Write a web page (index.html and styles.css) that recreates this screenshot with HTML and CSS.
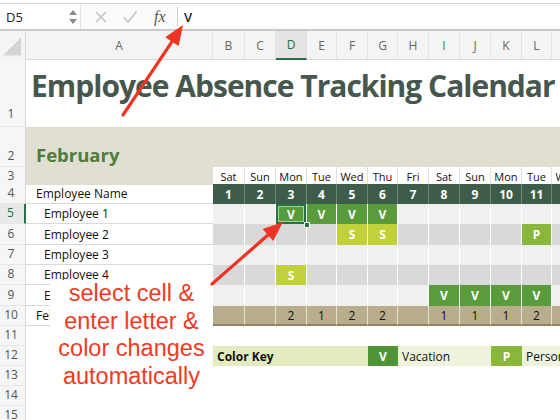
FILE: index.html
```html
<!DOCTYPE html>
<html>
<head>
<meta charset="utf-8">
<link rel="stylesheet" href="styles.css">
</head>
<body>
<div class="fbar">
  <div class="namebox"><span class="ref">D5</span><span class="spin"><i class="up"></i><i class="down"></i></span></div>
  <div class="tools">
    <svg class="ico" width="14" height="14" viewBox="0 0 14 14"><path d="M2 2 L12 12 M12 2 L2 12" stroke="#c4c4c4" stroke-width="1.6" fill="none"/></svg>
    <svg class="ico" width="16" height="14" viewBox="0 0 16 14"><path d="M1.5 7 L6 12 L14.5 1.5" stroke="#c4c4c4" stroke-width="1.6" fill="none"/></svg>
    <span class="fx">fx</span>
  </div>
  <div class="formula">V</div>
</div>

<div class="sheet">
  <div class="r hdr">
    <div class="corner"><svg width="26" height="29" viewBox="0 0 26 29"><polygon points="22,6 22,25 3,25" fill="#d4d4d4"/></svg></div>
    <div class="ch">A</div><div class="ch">B</div><div class="ch">C</div><div class="ch on">D</div><div class="ch">E</div><div class="ch">F</div><div class="ch">G</div><div class="ch">H</div><div class="ch">I</div><div class="ch">J</div><div class="ch">K</div><div class="ch">L</div><div class="ch">M</div>
  </div>

  <div class="r r1">
    <div class="rh">1</div>
    <div class="title">Employee Absence Tracking Calendar</div>
  </div>

  <div class="r r2">
    <div class="rh">2</div>
    <div class="month">February</div>
  </div>

  <div class="r r3">
    <div class="rh">3</div>
    <div class="abeige"></div>
    <div class="d">Sat</div><div class="d">Sun</div><div class="d">Mon</div><div class="d">Tue</div><div class="d">Wed</div><div class="d">Thu</div><div class="d">Fri</div><div class="d">Sat</div><div class="d">Sun</div><div class="d">Mon</div><div class="d">Tue</div><div class="d">Wed</div>
  </div>

  <div class="r rn">
    <div class="rh">4</div>
    <div class="a head">Employee Name</div>
    <div class="n">1</div><div class="n">2</div><div class="n">3</div><div class="n">4</div><div class="n">5</div><div class="n">6</div><div class="n">7</div><div class="n">8</div><div class="n">9</div><div class="n">10</div><div class="n">11</div><div class="n">12</div>
  </div>

  <div class="r rn lt">
    <div class="rh act">5</div>
    <div class="a">Employee 1</div>
    <div class="e"></div><div class="e"></div><div class="e v sel">V<span class="handle"></span></div><div class="e v">V</div><div class="e v">V</div><div class="e v">V</div><div class="e"></div><div class="e"></div><div class="e"></div><div class="e"></div><div class="e"></div><div class="e"></div>
  </div>

  <div class="r rn gy tall">
    <div class="rh">6</div>
    <div class="a">Employee 2</div>
    <div class="e"></div><div class="e"></div><div class="e"></div><div class="e"></div><div class="e s">S</div><div class="e s">S</div><div class="e"></div><div class="e"></div><div class="e"></div><div class="e"></div><div class="e p">P</div><div class="e"></div>
  </div>

  <div class="r rn lt">
    <div class="rh">7</div>
    <div class="a">Employee 3</div>
    <div class="e"></div><div class="e"></div><div class="e"></div><div class="e"></div><div class="e"></div><div class="e"></div><div class="e"></div><div class="e"></div><div class="e"></div><div class="e"></div><div class="e"></div><div class="e"></div>
  </div>

  <div class="r rn gy">
    <div class="rh">8</div>
    <div class="a">Employee 4</div>
    <div class="e"></div><div class="e"></div><div class="e s">S</div><div class="e"></div><div class="e"></div><div class="e"></div><div class="e"></div><div class="e"></div><div class="e"></div><div class="e"></div><div class="e"></div><div class="e"></div>
  </div>

  <div class="r rn lt tall">
    <div class="rh">9</div>
    <div class="a">Employee 5</div>
    <div class="e"></div><div class="e"></div><div class="e"></div><div class="e"></div><div class="e"></div><div class="e"></div><div class="e"></div><div class="e v">V</div><div class="e v">V</div><div class="e v">V</div><div class="e v">V</div><div class="e"></div>
  </div>

  <div class="r rn">
    <div class="rh">10</div>
    <div class="a head">February Total</div>
    <div class="t"></div><div class="t"></div><div class="t">2</div><div class="t">1</div><div class="t">2</div><div class="t">2</div><div class="t"></div><div class="t">1</div><div class="t">1</div><div class="t">1</div><div class="t">2</div><div class="t"></div>
  </div>

  <div class="r rn">
    <div class="rh">11</div>
  </div>

  <div class="r rn key">
    <div class="rh">12</div>
    <div></div>
    <div class="klabel">Color Key</div>
    <div class="kbox kv">V</div>
    <div class="ktext">Vacation</div>
    <div class="kbox kp">P</div>
    <div class="ktext k2">Personal</div>
  </div>

  <div class="r rn"><div class="rh">13</div></div>
  <div class="r rn"><div class="rh">14</div></div>
  <div class="r rn"><div class="rh">15</div></div>
</div>

<div class="callout">select cell &amp;<br>enter letter &amp;<br>color changes<br>automatically</div>

<svg class="arrows" width="560" height="420" viewBox="0 0 560 420">
  <line x1="123" y1="115" x2="172" y2="41.6" stroke="#ee3524" stroke-width="3.2" stroke-linecap="round"/>
  <polygon points="183,25 178.6,46 165.2,37.2" fill="#ee3524"/>
  <line x1="212" y1="284" x2="268" y2="235" stroke="#ee3524" stroke-width="3.2" stroke-linecap="round"/>
  <polygon points="283,222 273.2,241.1 262.6,229.1" fill="#ee3524"/>
</svg>
</body>
</html>
```

FILE: styles.css
```css
* { box-sizing: border-box; }

body {
  margin: 0;
  width: 560px;
  height: 420px;
  overflow: hidden;
  position: relative;
  background: #fff;
  font-family: "Open Sans", "DejaVu Sans", sans-serif;
  color: #111;
}

/* formula bar */
.fbar {
  margin-top: 3px;
  height: 28px;
  border-top: 1px solid #d6d6d6;
  border-bottom: 2px solid #c9c9c9;
  display: flex;
  align-items: stretch;
  background: #fbfbfb;
}
.namebox {
  width: 81px;
  background: #fff;
  border-right: 1px solid #e2e2e2;
  display: flex;
  align-items: center;
  justify-content: space-between;
  padding: 0 3px 0 6px;
}
.ref { font-size: 13px; color: #222; }
.spin { display: flex; flex-direction: column; gap: 4px; }
.spin i { display: block; width: 0; height: 0; border-left: 4px solid transparent; border-right: 4px solid transparent; }
.spin .up { border-bottom: 5px solid #888; }
.spin .down { border-top: 5px solid #888; }
.tools {
  width: 96px;
  display: flex;
  align-items: center;
  padding-left: 13px;
  gap: 14px;
}
.fx {
  font-family: "Liberation Serif", "DejaVu Serif", serif;
  font-style: italic;
  font-size: 16px;
  color: #555;
  margin-left: 2px;
}
.formula {
  flex: 1;
  background: #fff;
  border-left: 1px solid #cfcfcf;
  margin: 3px 0;
  padding-left: 6px;
  display: flex;
  align-items: center;
  font-size: 13px;
  font-weight: 600;
  color: #222;
}

/* sheet grid */
.r {
  display: grid;
  grid-template-columns: 26px 187px 32px 31px 31px 30px 31px 30px 31px 31px 31px 31px 30px 31px;
  height: 20px;
  font-size: 12px;
}
.r > div { display: flex; align-items: center; justify-content: center; min-width: 0; white-space: nowrap; }
.tall { height: 21px; }

.hdr { height: 29px; background: #f4f4f4; border-bottom: 1px solid #d8d8d8; }
.corner { background: #f4f4f4; border-right: 1px solid #d8d8d8; }
.ch { color: #666; font-size: 12px; border-right: 1px solid #e2e2e2; }
.ch.on { background: #e4e4e4; color: #217346; border-bottom: 2px solid #217346; }

.rh {
  background: #f6f6f6;
  color: #555;
  font-size: 12px;
  border-right: 1px solid #d6d6d6;
  border-bottom: 1px solid #e6e6e6;
  padding-right: 3px;
  align-items: flex-end !important;
  padding-bottom: 2px;
}
.rh.act { color: #217346; border-right: 2px solid #217346; background: #e8e8e8; }

.r1 { height: 67px; }
.r1 .rh { padding-bottom: 4px; }
.title {
  grid-column: 2 / -1;
  justify-content: flex-start !important;
  align-items: flex-start !important;
  padding: 5px 0 0 5px;
  font-weight: 700;
  font-size: 30px;
  color: #46584e;
  letter-spacing: -1px;
}

.r2 { height: 40px; }
.r2 .rh { padding-bottom: 2px; }
.month {
  grid-column: 2 / -1;
  background: #e1ded2;
  justify-content: flex-start !important;
  align-items: flex-end !important;
  padding: 0 0 0 10px;
  font-weight: 700;
  font-size: 18.5px;
  color: #4f7d39;
}

.r3 { height: 17px; }
.r3 .rh { padding-bottom: 0; }
.abeige { background: #e1ded2; }
.d { font-size: 11px; color: #111; border-right: 1px solid #e0e0e0; }

.a { justify-content: flex-start !important; padding-left: 18px; border-bottom: 1px solid #d9d9d9; }
.a.head { padding-left: 10px; }

.n { background: #3e5c4a; color: #fff; font-weight: 700; border-right: 1px solid #71877a; }

.e { border-right: 1px solid #fff; color: #fff; font-weight: 700; }
.lt .e { background: #f0f0f0; }
.gy .e { background: #d9d9d9; }
.e.v { background: #5a9b3c; }
.e.s { background: #c1d13b; }
.e.p { background: #89b73b; }

.sel {
  position: relative;
  box-shadow: inset 0 0 0 2px #217346, inset 0 0 0 3px #a9cf9a;
}
.handle {
  position: absolute;
  right: -4px;
  bottom: -4px;
  width: 6px;
  height: 6px;
  background: #217346;
  border: 1px solid #fff;
  z-index: 2;
}

.t { background: #b8ad8c; border-right: 1px solid #e6e0cf; border-bottom: 2px solid #8d8265; color: #111; }

.key .klabel {
  grid-column: 3 / 8;
  background: #e3ebc1;
  justify-content: flex-start !important;
  padding-left: 4px;
  font-weight: 700;
}
.kbox { color: #fff; font-weight: 700; }
.kv { background: #4f9436; }
.kp { background: #89b73b; }
.ktext {
  grid-column: 9 / 12;
  background: #eef3dc;
  justify-content: flex-start !important;
  padding-left: 4px;
}
.ktext.k2 { grid-column: 13 / 15; }

/* overlays */
.callout {
  position: absolute;
  left: 50px;
  top: 280px;
  width: 163px;
  height: 116px;
  background: #fff;
  text-align: center;
  font-family: "Liberation Sans", Arial, sans-serif;
  font-size: 23.5px;
  line-height: 27.5px;
  color: #f03a24;
}
.arrows { position: absolute; left: 0; top: 0; pointer-events: none; }
```
